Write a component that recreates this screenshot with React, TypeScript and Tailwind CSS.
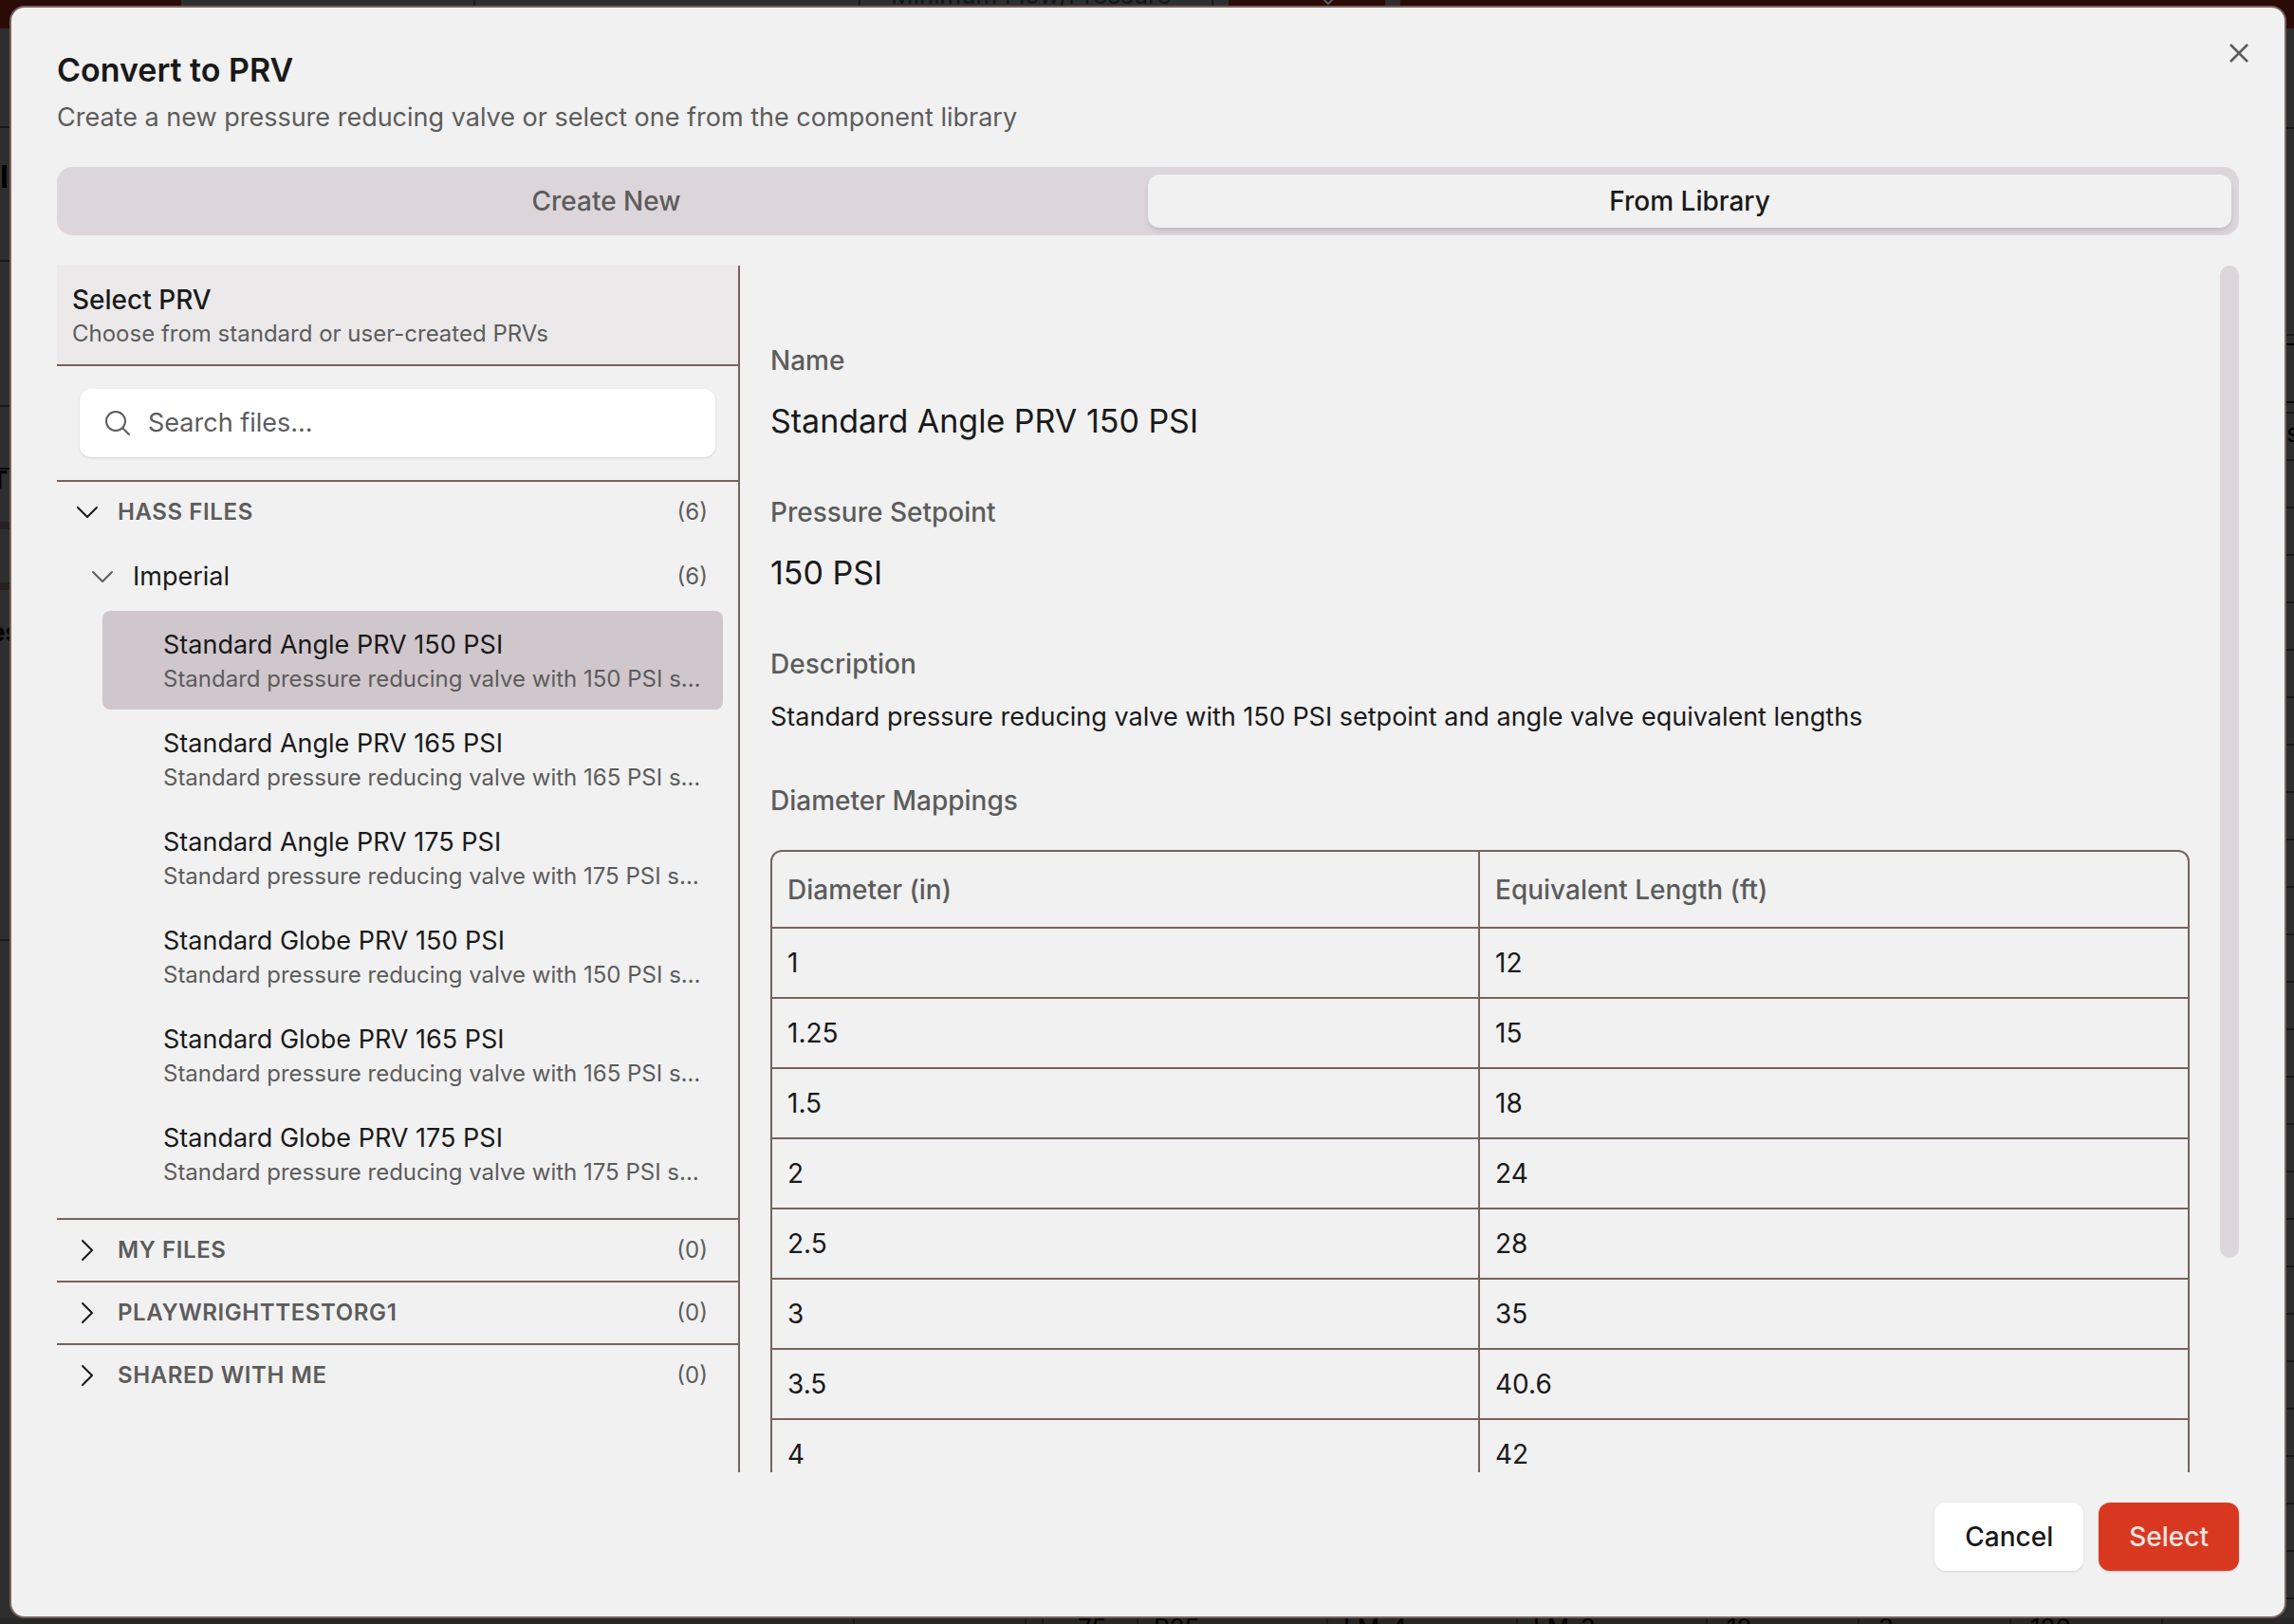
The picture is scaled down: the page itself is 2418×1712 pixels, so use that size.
import { useLayoutEffect, useRef, useState } from "react";

const standardPrvs = [
  { id: "a150", name: "Standard Angle PRV 150 PSI", psi: 150, body: "angle" },
  { id: "a165", name: "Standard Angle PRV 165 PSI", psi: 165, body: "angle" },
  { id: "a175", name: "Standard Angle PRV 175 PSI", psi: 175, body: "angle" },
  { id: "g150", name: "Standard Globe PRV 150 PSI", psi: 150, body: "globe" },
  { id: "g165", name: "Standard Globe PRV 165 PSI", psi: 165, body: "globe" },
  { id: "g175", name: "Standard Globe PRV 175 PSI", psi: 175, body: "globe" },
];

const mappings: [string, string][] = [
  ["1", "12"],
  ["1.25", "15"],
  ["1.5", "18"],
  ["2", "24"],
  ["2.5", "28"],
  ["3", "35"],
  ["3.5", "40.6"],
  ["4", "42"],
  ["5", "50"],
  ["6", "60"],
  ["8", "78"],
];

const emptyGroups = ["MY FILES", "PLAYWRIGHTTESTORG1", "SHARED WITH ME"];

// Table of the dimmed page, visible only past the edges of the dialog
const backdropRows = Array.from({ length: 25 }, (_, i) => i);
const backdropCells = [
  { text: "75", className: "w-[100px] pl-9" },
  { text: "R25", className: "w-[200px] pl-4" },
  { text: "LM-4", className: "w-[200px] pl-4" },
  { text: "LM-3", className: "w-[200px] pl-4" },
  { text: "12", className: "w-[160px] pl-5" },
  { text: "3", className: "w-[160px] pl-5" },
  { text: "120", className: "w-[160px] pl-5" },
];

function describe(prv: (typeof standardPrvs)[number]): string {
  return `Standard pressure reducing valve with ${prv.psi} PSI setpoint and ${prv.body} valve equivalent lengths`;
}

function Chevron({ open, className }: { open?: boolean; className: string }) {
  return (
    <svg
      viewBox="0 0 32 32"
      className={`size-8 shrink-0 ${className}`}
      fill="none"
      stroke="currentColor"
      strokeWidth="2"
      strokeLinecap="round"
      strokeLinejoin="round"
      aria-hidden="true"
    >
      <path d={open ? "M6 11l10 10 10-10" : "M11 6l10 10-10 10"} />
    </svg>
  );
}

function GroupHeader({ label, count, open }: { label: string; count: number; open?: boolean }) {
  return (
    <button className="flex h-16 w-full items-center gap-4 pr-8 pl-4 text-left text-2xl text-[#5c5c5c]">
      <Chevron open={open} className="text-[#19191a]" />
      <span className="flex-1 font-semibold tracking-wide">{label}</span>
      <span>({count})</span>
    </button>
  );
}

function Backdrop() {
  return (
    <div
      className="absolute inset-0 flex flex-col overflow-hidden bg-[#2e2e2e] text-[26px] leading-none text-black"
      aria-hidden="true"
    >
      <div className="h-[30px] shrink-0 bg-[#2a0b08] pl-[191px]">
        <div className="flex h-2 w-[1285px] items-end overflow-hidden bg-[#2e2e2e] text-[#141414]">
          <div className="h-2 w-[310px] border-r-2 border-[#191919]" />
          <div className="h-2 w-[406px] border-r-2 border-[#191919]" />
          <div className="flex h-2 w-[372px] items-end border-r-2 border-[#191919] pl-8 whitespace-nowrap">
            Minimum Flow/Pressure
          </div>
          <div className="ml-4 flex h-2 w-[165px] items-end justify-center bg-[#2a0b08] pl-11 text-[#5c5c5c]">
            <svg viewBox="0 0 12 8" className="h-2 w-3" fill="none" stroke="currentColor" strokeWidth="2">
              <path d="M1 -1l5 5 5-5" />
            </svg>
          </div>
        </div>
      </div>

      <div className="flex min-h-0 flex-1 justify-between">
        <div className="w-[10px] overflow-hidden font-bold">
          <div className="h-[105px] border-b-2 border-[#191919]" />
          <div className="h-[141px] border-b-2 border-[#191919] pt-9 text-[32px] leading-8">I</div>
          <div className="h-[153px] border-b-2 border-[#191919]" />
          <div className="h-[66px] border-b-2 border-black" />
          <div className="flex h-[55px] justify-end pt-px pr-0.5 leading-5">T</div>
          <div className="h-2 bg-[#262020]" />
          <div className="h-14" />
          <div className="h-2 bg-[#262020]" />
          <div className="flex h-[370px] justify-center border-b-2 border-[#191919] pt-8">es</div>
        </div>
        <div className="w-2 overflow-hidden">
          <div className="h-[106px] border-b-2 border-[#191919]" />
          <div className="h-[218px] border-b-2 border-[#191919]" />
          <div className="mt-2 h-[63px] border-y-2 border-black" />
          <div className="h-[11px] border-b-2 border-[#191919]" />
          <div className="h-[50px] border-b-2 border-[#191919] pt-2">s</div>
          {backdropRows.map((n) => (
            <div key={n} className="h-[50px] border-b-2 border-[#191919]" />
          ))}
        </div>
      </div>

      <div className="flex h-[6px] shrink-0 overflow-hidden bg-[#272727] pl-[899px] leading-5">
        <div className="w-[183px] border-x-2 border-[#191919]" />
        <div className="w-[18px] border-r-2 border-[#191919]" />
        {backdropCells.map((cell) => (
          <div key={cell.text} className={`border-r-2 border-[#191919] ${cell.className}`}>
            {cell.text}
          </div>
        ))}
      </div>
    </div>
  );
}

function ScrollPane({ children }: { children: React.ReactNode }) {
  const viewportRef = useRef<HTMLDivElement>(null);
  const [thumb, setThumb] = useState({ size: 100, offset: 0 });

  const measure = () => {
    const el = viewportRef.current;
    if (!el) return;
    setThumb({
      size: (el.clientHeight / el.scrollHeight) * 100,
      offset: (el.scrollTop / el.scrollHeight) * 100,
    });
  };

  useLayoutEffect(() => {
    measure();
    window.addEventListener("resize", measure);
    return () => window.removeEventListener("resize", measure);
  }, []);

  return (
    <div className="flex min-w-0 flex-1">
      <div
        ref={viewportRef}
        onScroll={measure}
        className="min-w-0 flex-1 overflow-y-auto px-8 pt-20 pb-8 [scrollbar-width:none]"
      >
        {children}
      </div>
      <div className="relative w-5 shrink-0">
        <div
          className="absolute inset-x-0 rounded-full bg-[#dcd6da]"
          style={{ height: `${thumb.size}%`, top: `${thumb.offset}%` }}
        />
      </div>
    </div>
  );
}

function Field({ label, children }: { label: string; children: React.ReactNode }) {
  return (
    <div className="flex flex-col gap-4">
      <dt className="text-[28px] leading-10 font-medium text-[#5c5c5c]">{label}</dt>
      {children}
    </div>
  );
}

export default function App() {
  const [selectedId, setSelectedId] = useState("a150");
  const [query, setQuery] = useState("");
  const selected = standardPrvs.find((p) => p.id === selectedId) ?? standardPrvs[0];

  return (
    <div className="relative flex h-screen overflow-hidden pt-[6px] pr-2 pb-[6px] pl-[10px] font-['Inter',sans-serif] text-[#19191a]">
      <Backdrop />
      <div
        role="dialog"
        aria-labelledby="dialog-title"
        className="relative flex min-w-0 flex-1 flex-col gap-8 rounded-2xl border-2 border-[#79625c] bg-[#f1f1f1] p-12"
      >
        <button
          aria-label="Close"
          className="absolute top-8 right-8 flex size-8 items-center justify-center text-[#5c5c5c]"
        >
          <svg viewBox="0 0 32 32" className="size-8" stroke="currentColor" strokeWidth="2.5" aria-hidden="true">
            <path d="M7 7l18 18M25 7L7 25" />
          </svg>
        </button>

        <header className="flex flex-col gap-3">
          <h2 id="dialog-title" className="text-[34px] leading-9 font-semibold">
            Convert to PRV
          </h2>
          <p className="text-[27px] leading-10 text-[#5c5c5c]">
            Create a new pressure reducing valve or select one from the component library
          </p>
        </header>

        <div role="tablist" className="grid h-18 grid-cols-2 rounded-2xl bg-[#dcd6da] p-2 text-[28px] font-medium">
          <button role="tab" aria-selected="false" className="rounded-xl text-[#5c5c5c]">
            Create New
          </button>
          <button role="tab" aria-selected="true" className="rounded-xl bg-[#f1f1f1] shadow-md">
            From Library
          </button>
        </div>

        <div className="flex min-h-0 flex-1">
          <aside className="flex w-[720px] shrink-0 flex-col border-r-2 border-[#79625c]">
            <div className="border-b-2 border-[#79625c] bg-[#ebe9ea] p-4">
              <h3 className="text-[28px] leading-10 font-medium">Select PRV</h3>
              <p className="text-2xl leading-8 text-[#5c5c5c]">Choose from standard or user-created PRVs</p>
            </div>
            <div className="border-b-2 border-[#79625c] p-6">
              <label className="flex h-18 items-center gap-4 rounded-xl bg-white px-6 shadow-sm">
                <svg
                  viewBox="0 0 32 32"
                  className="size-8 shrink-0 text-[#5c5c5c]"
                  fill="none"
                  stroke="currentColor"
                  strokeWidth="2"
                  strokeLinecap="round"
                  aria-hidden="true"
                >
                  <circle cx="14" cy="14" r="10" />
                  <path d="M21.500 21.500L28 28" />
                </svg>
                <input
                  type="text"
                  aria-label="Search files"
                  placeholder="Search files..."
                  value={query}
                  onChange={(e) => setQuery(e.target.value)}
                  className="min-w-0 flex-1 bg-transparent text-[27px] outline-none placeholder:text-[#5c5c5c]"
                />
              </label>
            </div>

            <GroupHeader label="HASS FILES" count={6} open />
            <button className="my-1 flex h-16 w-full items-center gap-4 pr-8 pl-8 text-left">
              <Chevron open className="text-[#5c5c5c]" />
              <span className="flex-1 text-[27px]">Imperial</span>
              <span className="text-2xl text-[#5c5c5c]">(6)</span>
            </button>
            <ul className="pr-4 pb-4 pl-12">
              {standardPrvs.map((prv) => (
                <li key={prv.id}>
                  <button
                    onClick={() => setSelectedId(prv.id)}
                    className={`block w-full rounded-lg py-4 pr-5 pl-16 text-left ${prv.id === selectedId ? "bg-[#d0c7cc]" : ""}`}
                  >
                    <span className="block truncate text-[27px] leading-10">{prv.name}</span>
                    <span className="block truncate text-2xl leading-8 text-[#5c5c5c]">{describe(prv)}</span>
                  </button>
                </li>
              ))}
            </ul>
            {emptyGroups.map((label) => (
              <div key={label} className="border-t-2 border-[#79625c]">
                <GroupHeader label={label} count={0} />
              </div>
            ))}
          </aside>

          <ScrollPane>
            <dl className="flex flex-col gap-12">
              <Field label="Name">
                <dd className="text-[34px] leading-14">{selected.name}</dd>
              </Field>
              <Field label="Pressure Setpoint">
                <dd className="text-[34px] leading-14">{selected.psi} PSI</dd>
              </Field>
              <Field label="Description">
                <dd className="text-[27px] leading-10">{describe(selected)}</dd>
              </Field>
            </dl>
            <h4 className="mt-12 mb-8 text-[28px] leading-10 font-medium text-[#5c5c5c]">Diameter Mappings</h4>
            <div className="overflow-hidden rounded-xl border-2 border-[#79625c]">
              <table className="w-full table-fixed border-separate border-spacing-0 text-left text-[28px]">
                <thead>
                  <tr className="h-[81px] text-[#5c5c5c]">
                    <th className="border-r-2 border-b-2 border-[#79625c] px-4 font-medium">Diameter (in)</th>
                    <th className="border-b-2 border-[#79625c] px-4 font-medium">Equivalent Length (ft)</th>
                  </tr>
                </thead>
                <tbody>
                  {mappings.map(([diameter, length]) => (
                    <tr key={diameter} className="group h-[74px]">
                      <td className="border-r-2 border-b-2 border-[#79625c] px-4 group-last:border-b-0">{diameter}</td>
                      <td className="border-b-2 border-[#79625c] px-4 group-last:border-b-0">{length}</td>
                    </tr>
                  ))}
                </tbody>
              </table>
            </div>
          </ScrollPane>
        </div>

        <footer className="flex justify-end gap-4 text-[28px] font-medium">
          <button className="h-18 rounded-xl bg-white px-8 shadow-sm">Cancel</button>
          <button className="h-18 rounded-xl bg-[#d93820] px-8 text-[#f1e4e2] shadow-sm">Select</button>
        </footer>
      </div>
    </div>
  );
}
